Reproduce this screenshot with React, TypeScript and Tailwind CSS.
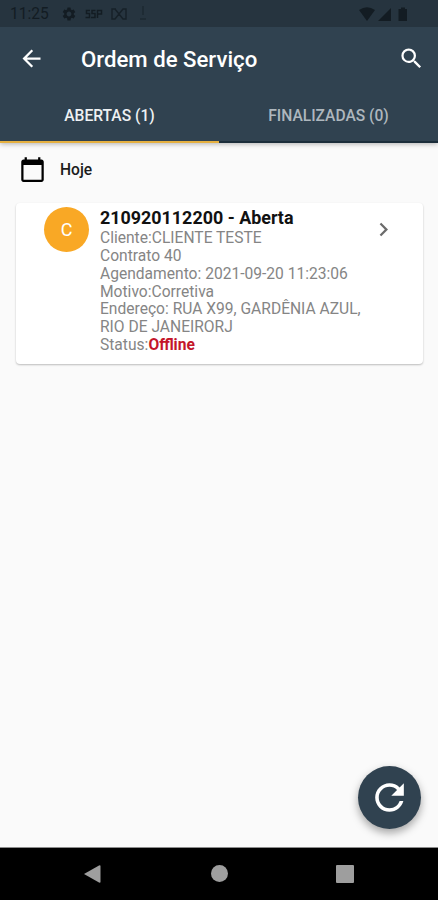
import type { ReactNode } from "react";
import {
  MdArrowBack,
  MdCalendarToday,
  MdChevronRight,
  MdRefresh,
  MdSearch,
  MdSettings,
} from "react-icons/md";

const order = {
  id: "210920112200",
  state: "Aberta",
  client: "CLIENTE TESTE",
  contract: 40,
  schedule: "2021-09-20 11:23:06",
  reason: "Corretiva",
  address: "RUA X99, GARDÊNIA AZUL, RIO DE JANEIRORJ",
  status: "Offline",
};

export default function App() {
  return (
    <div className="flex h-[900px] w-[438px] flex-col overflow-hidden bg-[#fafafa] font-['Roboto',sans-serif]">
      <header className="z-10 bg-[#304250] shadow-[0_1px_5px_rgba(0,0,0,0.3)]">
        <StatusBar />
        <div className="flex h-[62px] items-center pr-[13px] pl-[18px]">
          <MdArrowBack className="size-[27px] text-white" />
          <h1 className="ml-9 flex-1 pt-[3px] text-[22.2px] font-medium whitespace-nowrap text-white">
            Ordem de Serviço
          </h1>
          <MdSearch className="size-[27px] text-white" />
        </div>
        <nav className="flex h-[54px]">
          <Tab active>ABERTAS (1)</Tab>
          <Tab>FINALIZADAS (0)</Tab>
        </nav>
      </header>

      <main className="flex flex-1 flex-col">
        <div className="flex h-[54px] items-center gap-[14px] pl-[19px]">
          <MdCalendarToday className="mb-px size-[27px] text-black" />
          <span className="pt-[2px] text-[15.6px] font-medium text-[#1c1c1c]">Hoje</span>
        </div>
        <OrderCard />
        <button className="mt-auto mr-[17px] mb-[18px] flex size-[63px] items-center justify-center self-end rounded-full bg-[#304250] text-white shadow-[0_4px_8px_rgba(0,0,0,0.35)]">
          <MdRefresh className="size-[43px]" />
        </button>
      </main>

      <NavigationBar />
    </div>
  );
}

function StatusBar() {
  return (
    <div className="flex h-[27px] items-center bg-[#26343f] pr-[30px] pl-[10px] text-[#131c23]">
      <span className="w-[51px] pt-[3px] text-[15.6px]">11:25</span>
      <MdSettings className="size-4" />
      <svg className="ml-2 h-[10px] w-[18px]" viewBox="0 0 18 10" fill="none" stroke="currentColor" strokeWidth="1.5">
        <path d="M5 1.5H1.5V4.5H4.5V8.5H0.5M10.5 1.5H7V4.5H10V8.5H6M12.5 9V1.5H16.5V5H12.5" />
      </svg>
      <svg className="ml-2 h-3 w-4 opacity-80" viewBox="0 0 16 12" fill="none" stroke="currentColor" strokeWidth="1.4">
        <path d="M5 1H1V11H4L12 1H15V11H12L4 1" />
      </svg>
      <svg className="mb-px ml-3 h-[14px] w-2 opacity-70" viewBox="0 0 8 14" stroke="currentColor" strokeWidth="1">
        <path d="M4 0V9M1 13H7" />
      </svg>
      <svg className="ml-auto h-[14px] w-[50px]" viewBox="0 0 50 14" fill="currentColor">
        <path d="M1 3Q9 -2.5 17 3L9 14Z" />
        <path d="M20 14L33 1V14Z" />
        <path d="M40.5 2H43V0.5H47V2H49V14H40.5Z" />
      </svg>
    </div>
  );
}

function Tab({ active, children }: { active?: boolean; children: ReactNode }) {
  return (
    <div
      className={
        active
          ? "flex-1 border-b-2 border-[#e5b040] pt-4 text-center text-[15.6px] font-medium text-[#eef1f3]"
          : "flex-1 border-b-2 border-[#1b2d3a] pt-4 text-center text-[15.6px] font-medium text-[#aeb7be]"
      }
    >
      {children}
    </div>
  );
}

function OrderCard() {
  return (
    <article className="mr-[15px] ml-4 mt-1.5 flex h-[161px] rounded-[4px] bg-white pt-1 pr-[25px] pl-7 shadow-[0_1px_2px_rgba(0,0,0,0.25)]">
      <div className="flex size-[45px] shrink-0 items-center justify-center rounded-full bg-[#f9a825] text-[18px] text-white">
        C
      </div>
      <div className="ml-[11px] w-[268px] shrink-0 text-[15.6px] leading-[17.84px] text-[#858585]">
        <h2 className="pt-px pb-[2px] text-[17.9px] leading-5 font-bold text-[#111]">
          {order.id} - {order.state}
        </h2>
        <p>Cliente:{order.client}</p>
        <p>Contrato {order.contract}</p>
        <p>Agendamento: {order.schedule}</p>
        <p>Motivo:{order.reason}</p>
        <p>Endereço: {order.address}</p>
        <p>
          Status:<b className="font-bold text-[#c4162a]">{order.status}</b>
        </p>
      </div>
      <MdChevronRight className="mt-[9px] ml-[2px] size-[27px] shrink-0 text-[#6b6b6b]" />
    </article>
  );
}

function NavigationBar() {
  return (
    <footer className="flex h-[53px] items-start justify-between border-t border-[#8c8c8c] bg-black px-[83px] pt-[17px] text-[#9e9e9e]">
      <svg className="h-[18px] w-[18px]" viewBox="0 0 18 18" fill="currentColor">
        <path d="M1 9L16 0.5Q17.5 0 17.5 1V17Q17.5 18 16 17.5Z" />
      </svg>
      <div className="ml-[2px] size-[17px] rounded-full bg-[#9e9e9e]" />
      <div className="mr-px size-[18px] rounded-[1px] bg-[#9e9e9e]" />
    </footer>
  );
}
